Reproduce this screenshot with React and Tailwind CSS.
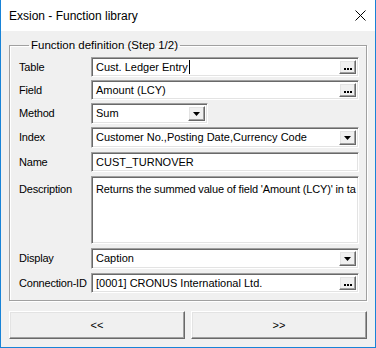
import React from 'react';

const sunken = 'border border-t-[#a0a0a0] border-l-[#a0a0a0] border-b-white border-r-white shadow-[inset_1px_1px_0_#696969,inset_-1px_-1px_0_#e3e3e3] bg-white';
const raised = 'bg-[#f0f0f0] border border-t-white border-l-white border-b-[#696969] border-r-[#696969] shadow-[inset_-1px_-1px_0_#a0a0a0,inset_1px_1px_0_#e3e3e3]';

function DotsButton() {
  return (
    <div className={`${raised} w-[17px] h-full flex items-end justify-center pb-[3px] shrink-0`}>
      <div className="flex gap-[1px]">
        <span className="w-[2px] h-[2px] bg-black" />
        <span className="w-[2px] h-[2px] bg-black" />
        <span className="w-[2px] h-[2px] bg-black" />
      </div>
    </div>
  );
}

function ArrowButton() {
  return (
    <div className={`${raised} w-[17px] h-full flex items-center justify-center shrink-0`}>
      <svg width="7" height="4" viewBox="0 0 7 4">
        <path d="M0 0H7L3.5 4Z" fill="#000" />
      </svg>
    </div>
  );
}

function Field({ value, button, cursor, className = '' }) {
  return (
    <div className={`${sunken} flex items-stretch min-w-0 p-[2px] ${className}`}>
      <div className="flex-1 min-w-0 flex items-center pl-[2px] overflow-hidden whitespace-nowrap">
        {value}
        {cursor && <span className="w-px h-[14px] bg-black ml-[1px]" />}
      </div>
      {button === 'dots' && <DotsButton />}
      {button === 'arrow' && <ArrowButton />}
    </div>
  );
}

function Row({ label, children, className = '', labelClass = 'items-center' }) {
  return (
    <div className={`flex ${labelClass} ${className}`}>
      <div className="w-[72px] shrink-0 whitespace-nowrap tracking-[-0.2px]">{label}</div>
      <div className="flex-1 min-w-0 flex">{children}</div>
    </div>
  );
}

export default function App() {
  return (
    <div
      className="w-[376px] h-[348px] bg-[#f0f0f0] border-x border-b border-[#1883d7] flex flex-col text-[11px] text-black overflow-hidden"
      style={{ fontFamily: '"Liberation Sans", Arial, sans-serif' }}
    >
      {/* Title bar */}
      <div className="h-[31px] bg-white flex items-center justify-between pl-[8px] pr-[9px] shrink-0">
        <span className="text-[12px]">Exsion - Function library</span>
        <svg width="11" height="11" viewBox="0 0 11 11">
          <path d="M0.5 0.5L10.5 10.5M10.5 0.5L0.5 10.5" stroke="#000" strokeWidth="1" />
        </svg>
      </div>

      <div className="flex-1 flex flex-col px-[8px] pt-[8px]">
        <fieldset className="min-w-0 border border-[#a0a0a0] shadow-[inset_1px_1px_0_#fff,1px_1px_0_#fff] h-[262px] pl-[9px] pr-[7px]">
          <legend className="ml-[10px] px-[2px] leading-[13px] text-[11.5px]">Function definition (Step 1/2)</legend>
          <div className="flex flex-col pt-[5px]">
            <Row label="Table">
              <Field value="Cust. Ledger Entry" button="dots" cursor className="flex-1 h-[20px]" />
            </Row>
            <Row label="Field" className="mt-[3px]">
              <Field value="Amount (LCY)" button="dots" className="flex-1 h-[20px]" />
            </Row>
            <Row label="Method" className="mt-[3px]">
              <Field value="Sum" button="arrow" className="w-[117px] h-[21px]" />
            </Row>
            <Row label="Index" className="mt-[3px]">
              <Field value="Customer No.,Posting Date,Currency Code" button="arrow" className="flex-1 h-[21px]" />
            </Row>
            <Row label="Name" className="mt-[4px]">
              <Field value="CUST_TURNOVER" className="flex-1 h-[20px]" />
            </Row>
            <Row label={<div className="pt-[5px]">Description</div>} labelClass="items-start" className="mt-[4px]">
              <div className={`${sunken} flex-1 min-w-0 h-[68px] p-[2px] pl-[4px] pt-[4px] overflow-hidden whitespace-nowrap tracking-[-0.15px]`}>
                Returns the summed value of field 'Amount (LCY)' in ta
              </div>
            </Row>
            <Row label="Display" className="mt-[4px]">
              <Field value="Caption" button="arrow" className="flex-1 h-[21px]" />
            </Row>
            <Row label="Connection-ID" className="mt-[4px]">
              <Field value="[0001] CRONUS International Ltd." button="dots" className="flex-1 h-[20px]" />
            </Row>
          </div>
        </fieldset>

        <div className="flex gap-[6px] mt-[10px]">
          <button className={`${raised} flex-1 h-[28px] flex items-center justify-center`}>&lt;&lt;</button>
          <button className={`${raised} flex-1 h-[28px] flex items-center justify-center`}>&gt;&gt;</button>
        </div>
      </div>
    </div>
  );
}
